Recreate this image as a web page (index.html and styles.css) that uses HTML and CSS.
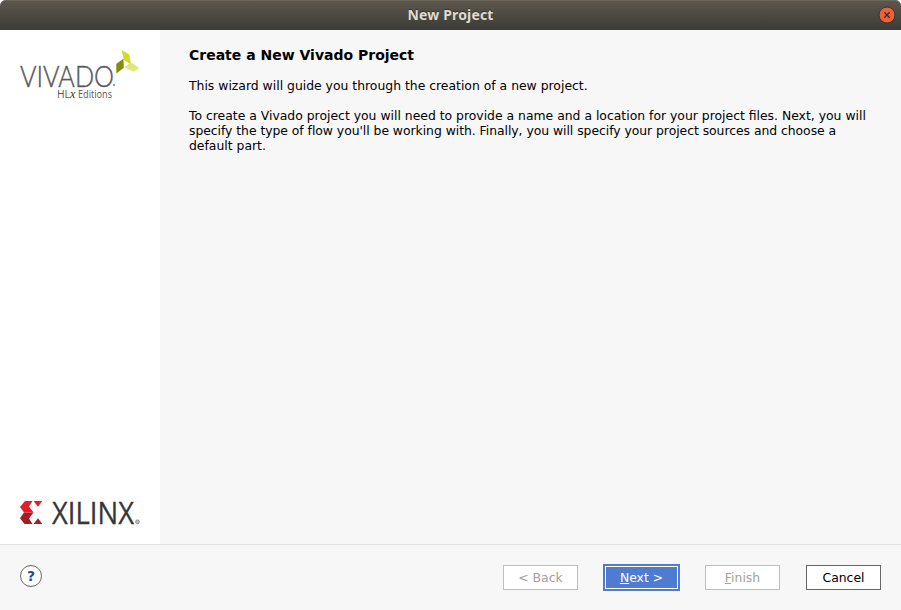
FILE: index.html
```html
<!DOCTYPE html>
<html lang="en">
<head>
<meta charset="utf-8">
<title>New Project</title>
<link rel="stylesheet" href="styles.css">
</head>
<body>
<div class="window">
  <header class="titlebar">
    <h1 class="title">New Project</h1>
    <button class="close" aria-label="Close"><svg width="18" height="18" viewBox="0 0 18 18"><circle cx="9" cy="9" r="8" fill="#ee6039" stroke="#383630"/><path d="M6.3 6.3l5.4 5.4M11.7 6.3l-5.4 5.4" stroke="#3b2c22" stroke-width="1.3"/></svg></button>
  </header>
  <div class="body">
    <aside class="side">
      <svg class="logo" width="122" height="54" viewBox="19 48 122 54">
        <text class="vivado" x="20" y="86.5" textLength="94" lengthAdjust="spacingAndGlyphs">VIVADO</text>
        <circle cx="114" cy="85" r=".9" fill="#777"/>
        <text class="editions" x="57" y="98" textLength="13" lengthAdjust="spacingAndGlyphs">HL</text>
        <text class="ex" x="70" y="98">x</text>
        <text class="editions" x="78" y="98" textLength="34" lengthAdjust="spacingAndGlyphs">Editions</text>
        <path d="M121.7 50l7.6 4.6 1.8 9.8-7.3-4.4z" fill="#cfdc28"/>
        <path d="M116.2 64l7.2-5.2.4 9-7.4 5.7z" fill="#848c0c"/>
        <path d="M124.3 67.2l6.5-4.6 8.5 5.2-5.8 4z" fill="#dfe77a"/>
      </svg>
      <svg class="logo" width="122" height="28" viewBox="19 499 122 28">
        <path d="M25 501h7.5l-3.5 5.5 4.5 6h-9.5l-4-5.5zM33.5 501h8.8l-4.3 5.8z" fill="#e41e28"/>
        <path d="M24 512.5h9.5l-4.5 6 3.5 5.5h-8l-4.5-5.8zM33.5 524h8.8l-4.3-5.8z" fill="#a31e24"/>
        <text class="xilinx" x="52" y="524" textLength="82" lengthAdjust="spacingAndGlyphs">XILINX</text>
        <circle cx="137.5" cy="521.8" r="2" fill="#bbb" stroke="#777" stroke-width=".6"/>
      </svg>
    </aside>
    <main class="content">
      <h2>Create a New Vivado Project</h2>
      <p>This wizard will guide you through the creation of a new project.</p>
      <p>To create a Vivado project you will need to provide a name and a location for your project files. Next, you will<br><span class="tight">specify the type of flow you'll be working with. Finally, you will specify your project sources and choose a</span><br>default part.</p>
    </main>
  </div>
  <footer class="footer">
    <button class="help">?</button>
    <button class="btn disabled">&lt; Back</button>
    <button class="btn primary"><span><u>N</u>ext &gt;</span></button>
    <button class="btn disabled finish"><span><u>F</u>inish</span></button>
    <button class="btn">Cancel</button>
  </footer>
</div>
</body>
</html>
```
FILE: styles.css
```css
* { box-sizing: border-box; }
body { margin: 0; background: #fff; font-family: "DejaVu Sans", sans-serif; font-size: 12.4px; color: #000; }
button { font: inherit; padding: 0; margin: 0; }
.window { width: 901px; height: 610px; display: flex; flex-direction: column; }
.titlebar { height: 30px; display: grid; grid-template-columns: 1fr auto 1fr; align-items: center; border-radius: 6px 6px 0 0; background: linear-gradient(#5c584c, #3c3b37); box-shadow: inset 0 1px #6a665a; }
.title { grid-column: 2; margin: 0; font: bold 14px/30px "Noto Sans", sans-serif; letter-spacing: .15px; color: #dfdbd2; text-shadow: 0 -1px #333; }
.close { justify-self: end; width: 18px; height: 18px; margin-right: 5px; border: 0; background: none; }
.close svg { display: block; }
.body { height: 514px; display: flex; }
.side { width: 160px; padding: 18px 19px 17px; background: #fff; display: flex; flex-direction: column; justify-content: space-between; }
.logo { display: block; overflow: visible; }
.vivado { font: 300 29px Lato, sans-serif; fill: #58595b; stroke: #58595b; stroke-width: .4px; }
.editions { font: 10px "Open Sans", sans-serif; fill: #58595b; }
.ex { font: italic 12px "Liberation Serif", serif; fill: #333; }
.xilinx { font: 31.5px "Open Sans", sans-serif; fill: #363638; stroke: #363638; stroke-width: .3px; }
.content { flex: 1; padding: 17px 0 0 29px; background: #f7f7f7; }
h2 { margin: 0 0 15px; font-size: 14px; line-height: 16px; }
p { margin: 0 0 15px; line-height: 15px; white-space: nowrap; }
.tight { letter-spacing: -.04px; }
.footer { height: 66px; display: flex; padding: 20px 20px 0; border-top: 1px solid #e2e2e2; background: #f7f7f7; }
.help { width: 22px; height: 22px; margin-right: auto; border: 1px solid #666; border-radius: 50%; background: #fff; color: #2c4a8a; font-size: 14px; font-weight: bold; line-height: 20px; }
.btn { width: 75px; height: 25px; margin-left: 26px; border: 1px solid #666; background: #fff; color: #000; }
.disabled { border-color: #bebebe; color: #a0a0a0; }
.primary { width: 77px; height: 27px; margin: -1px 0 0 25px; border: 2px solid #4f7bd0; background: #4f7bd0; box-shadow: inset 0 0 0 1px #fff; color: #fff; }
.finish { margin-left: 25px; }
u { text-underline-offset: 1px; }
```
